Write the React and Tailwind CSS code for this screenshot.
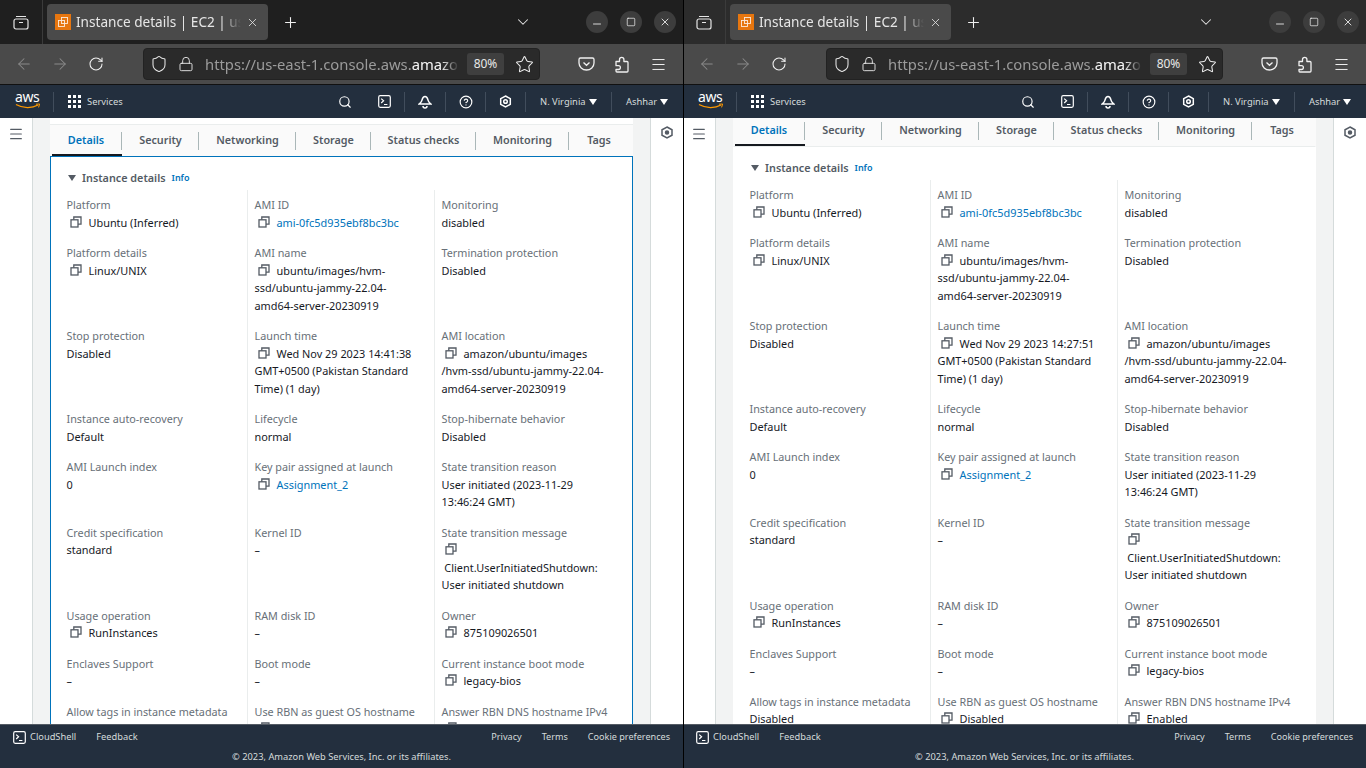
import { ArrowLeft, ArrowRight, ChevronDown, CircleHelp, Lock, Menu, Minus, Plus, RotateCw, Search, Shield, Square, Star, X } from "lucide-react";

const rows = (launch) => [
  [
    { label: "Platform", value: "Ubuntu (Inferred)", copy: true },
    { label: "AMI ID", value: "ami-0fc5d935ebf8bc3bc", copy: true, link: true },
    { label: "Monitoring", value: "disabled" },
  ],
  [
    { label: "Platform details", value: "Linux/UNIX", copy: true },
    { label: "AMI name", value: "ubuntu/images/hvm-\nssd/ubuntu-jammy-22.04-\namd64-server-20230919", copy: true },
    { label: "Termination protection", value: "Disabled" },
  ],
  [
    { label: "Stop protection", value: "Disabled" },
    { label: "Launch time", value: `Wed Nov 29 2023 ${launch}\nGMT+0500 (Pakistan Standard\nTime) (1 day)`, copy: true },
    { label: "AMI location", value: "amazon/ubuntu/images\n/hvm-ssd/ubuntu-jammy-22.04-\namd64-server-20230919", copy: true },
  ],
  [
    { label: "Instance auto-recovery", value: "Default" },
    { label: "Lifecycle", value: "normal" },
    { label: "Stop-hibernate behavior", value: "Disabled" },
  ],
  [
    { label: "AMI Launch index", value: "0" },
    { label: "Key pair assigned at launch", value: "Assignment_2", copy: true, link: true },
    { label: "State transition reason", value: "User initiated (2023-11-29\n13:46:24 GMT)" },
  ],
  [
    { label: "Credit specification", value: "standard" },
    { label: "Kernel ID", value: "–" },
    { label: "State transition message", value: "\n\u00a0Client.UserInitiatedShutdown:\nUser initiated shutdown", copy: true },
  ],
  [
    { label: "Usage operation", value: "RunInstances", copy: true },
    { label: "RAM disk ID", value: "–" },
    { label: "Owner", value: "875109026501", copy: true },
  ],
  [
    { label: "Enclaves Support", value: "–" },
    { label: "Boot mode", value: "–" },
    { label: "Current instance boot mode", value: "legacy-bios", copy: true },
  ],
  [
    { label: "Allow tags in instance metadata", value: "Disabled" },
    { label: "Use RBN as guest OS hostname", value: "Disabled", copy: true },
    { label: "Answer RBN DNS hostname IPv4", value: "Enabled", copy: true },
  ],
];

const tabs = [
  { name: "Details", width: "w-[72px]" },
  { name: "Security", width: "w-[77px]" },
  { name: "Networking", width: "w-[97px]" },
  { name: "Storage", width: "w-[75px]" },
  { name: "Status checks", width: "w-[105px]" },
  { name: "Monitoring", width: "w-[93px]" },
  { name: "Tags", width: "w-[60px]" },
];

function CopyIcon() {
  return (
    <svg width="12" height="12" viewBox="0 0 12 12" fill="none" stroke="#545b64" strokeWidth="1.3" className="inline-block ml-[3px] mr-[7px] align-[-1px]">
      <rect x="1" y="3.8" width="7" height="7.2" />
      <path d="M3.8 3.8V1H11v7.2H8" />
    </svg>
  );
}

function TerminalIcon() {
  return (
    <svg width="13" height="13" viewBox="0 0 13 13" fill="none" stroke="#fff" strokeWidth="1.2">
      <rect x="0.7" y="0.7" width="11.6" height="11.6" rx="1.5" />
      <path d="M3.2 3.6 5.6 5.8 3.2 8M6 9.5h3.4" />
    </svg>
  );
}

function Caret() {
  return <span className="block w-0 h-0 border-l-[4px] border-r-[4px] border-t-[6px] border-l-transparent border-r-transparent border-t-[#fff]" />;
}

function NavDivider() {
  return <span className="block w-px h-[20px] bg-[#414d5c]" />;
}

function FoxTab() {
  return (
    <div className="w-[221px] h-[36px] flex-none rounded-[4px] bg-[#4a4a4a] flex items-center pl-[8px] pr-[9px] gap-[5px]">
      <span className="w-[16px] h-[16px] bg-[#e7760f] flex items-center justify-center flex-none">
        <svg width="12" height="12" viewBox="0 0 12 12" fill="none" stroke="#fff" strokeWidth="0.9" opacity="0.85">
          <rect x="4.5" y="1.5" width="6" height="6" />
          <rect x="1.5" y="4.5" width="6" height="6" />
        </svg>
      </span>
      <span className="flex-1 mt-[1px] overflow-hidden whitespace-nowrap text-[13.6px] text-[#e6e6e6] [mask-image:linear-gradient(to_right,#000_88%,transparent_100%)]">Instance details | EC2 | us-east-1</span>
      <X size={13} strokeWidth={1.5} color="#e6e6e6" className="flex-none" />
    </div>
  );
}

function WindowButton({ children }) {
  return <span className="w-[22px] h-[22px] rounded-full bg-[#3d3d3d] flex items-center justify-center text-white">{children}</span>;
}

function BrowserChrome({ dark }) {
  return (
    <>
      <div className={`h-[44px] flex items-center flex-none ${dark ? "bg-[#1f1f1f]" : "bg-[#2c2c2c]"}`}>
        <div className="w-[43px] h-full flex-none flex items-center justify-center border-r border-[#3b3b3b] mr-[4px] text-[#e6e6e6]">
          <svg width="16" height="16" viewBox="0 0 16 16" fill="none" stroke="currentColor" strokeWidth="1.2">
            <rect x="1" y="5" width="14" height="10" rx="2" />
            <path d="M3 2.500h10M6 8.500h4" />
          </svg>
        </div>
        <FoxTab />
        <div className="w-[44px] flex-none flex justify-center">
          <Plus size={17} strokeWidth={1.5} color="#f0f0f0" />
        </div>
        <div className="flex-1 flex items-center pr-[7px] gap-[12px] justify-end">
          <ChevronDown size={18} strokeWidth={1.4} color="#e6e6e6" className="mr-[42px]" />
          <WindowButton><Minus size={12} strokeWidth={1.6} className="mt-[4px]" /></WindowButton>
          <WindowButton><Square size={10} strokeWidth={1.6} /></WindowButton>
          <WindowButton><X size={12} strokeWidth={1.6} /></WindowButton>
        </div>
      </div>
      <div className="h-[40px] flex items-center bg-[#4a4a4a] flex-none border-b border-[#111] box-content">
        <div className="w-[143px] flex-none flex items-center pl-[15px] gap-[18px]">
          <ArrowLeft size={18} strokeWidth={1.4} color="#8a8a8a" />
          <ArrowRight size={18} strokeWidth={1.4} color="#8a8a8a" />
          <RotateCw size={16} strokeWidth={1.6} color="#f0f0f0" className="ml-[1px]" />
        </div>
        <div className="w-[397px] h-[32px] flex-none rounded-[4px] bg-[#2a2a2a] border border-[#222] flex items-center pl-[6px] pr-[5px]">
          <Shield size={18} strokeWidth={1.4} color="#e6e6e6" className="flex-none" />
          <Lock size={16} strokeWidth={1.4} color="#e6e6e6" className="flex-none ml-[10px]" />
          <span className="flex-1 ml-[11px] overflow-hidden whitespace-nowrap text-[14.8px] text-[#9b9b9b] [mask-image:linear-gradient(to_right,#000_93%,transparent_100%)]">
            https://us-east-1.console.aws.<span className="text-[#f5f5f5]">amazon</span>.com
          </span>
          <span className="w-[37px] h-[22px] ml-[8px] rounded-[3px] bg-[#3f3f3f] text-[#e8e8e8] text-[12px] flex items-center justify-center flex-none">80%</span>
          <Star size={19} strokeWidth={1.3} color="#f0f0f0" className="flex-none ml-[11px]" />
        </div>
        <div className="flex-1 flex items-center pl-[38px] gap-[19px] text-[#f0f0f0]">
          <svg width="17" height="16" viewBox="0 0 17 16" fill="none" stroke="currentColor" strokeWidth="1.3">
            <path d="M2.5 2h12A1.5 1.5 0 0 1 16 3.5V7a7.5 7 0 0 1-15 0V3.5A1.5 1.5 0 0 1 2.5 2Z" />
            <path d="M5.5 6.5 8.500 9.300l3-2.800" />
          </svg>
          <svg width="17" height="17" viewBox="0 0 17 17" fill="none" stroke="currentColor" strokeWidth="1.300" strokeLinejoin="round">
            <path d="M2 5.500h3.500V3.500a2.200 2.200 0 0 1 4.400 0v2H13a1 1 0 0 1 1 1v8.500a1 1 0 0 1-1 1H3a1 1 0 0 1-1-1v-1.500h2.500a1.900 1.900 0 0 0 0-3.800H2Z" />
          </svg>
          <Menu size={17} strokeWidth={1.4} />
        </div>
      </div>
    </>
  );
}

function AwsNav() {
  return (
    <div className="h-[33px] bg-[#232f3e] flex items-center flex-none text-[#d5dbdb] text-[9.4px] whitespace-nowrap">
      <div className="w-[53px] pl-[15px] flex flex-col items-start leading-[11px] text-white">
        <span className="text-[14px] font-normal tracking-[-0.4px] h-[11px] -mt-[3px]">aws</span>
        <svg width="26" height="7" viewBox="0 0 26 7" fill="none" className="mt-[1px]">
          <path d="M1 1.5C8 5.5 17 5.5 23 2" stroke="#f90" strokeWidth="1.3" />
          <path d="M21 1.2 24.6 1 23.6 4.400" stroke="#f90" strokeWidth="1" />
        </svg>
      </div>
      <NavDivider />
      <div className="grid grid-cols-3 gap-[2px] ml-[14px] w-[13px] flex-none">
        {Array.from({ length: 9 }).map((_, i) => (
          <span key={i} className="w-[3px] h-[3px] bg-white" />
        ))}
      </div>
      <span className="ml-[6px] mt-[1px]">Services</span>
      <div className="ml-auto flex items-center">
        <span className="w-[20px] flex justify-center"><Search size={14} strokeWidth={2} color="#fff" /></span>
        <span className="w-[19px] ml-[20px] flex justify-center"><TerminalIcon /></span>
        <span className="ml-[10px]"><NavDivider /></span>
        <span className="w-[40px] flex justify-center">
          <svg width="14" height="14" viewBox="0 0 14 14" fill="none" stroke="#fff" strokeWidth="1.5">
            <path d="M7 1.500c2.200 0 2.600 2 3 3.600.4 1.600 1.200 2.600 2.600 3.800H1.400C2.800 7.700 3.600 6.700 4 5.100 4.400 3.500 4.800 1.500 7 1.500Z" />
            <path d="M5 11a2 2 0 0 0 4 0" />
          </svg>
        </span>
        <NavDivider />
        <span className="w-[39px] flex justify-center"><CircleHelp size={14} strokeWidth={2} color="#fff" /></span>
        <NavDivider />
        <span className="w-[39px] flex justify-center">
          <svg width="13" height="13" viewBox="0 0 13 13" fill="none" stroke="#fff" strokeWidth="1.5">
            <path d="M6.500 1 11.300 3.700v5.600L6.500 12 1.700 9.300V3.700Z" />
            <circle cx="6.500" cy="6.500" r="1.800" />
          </svg>
        </span>
        <NavDivider />
        <span className="ml-[14px] mt-[1px] w-[45px]">N. Virginia</span>
        <span className="ml-[4px] mr-[14px]"><Caret /></span>
        <NavDivider />
        <span className="ml-[14px] mt-[1px] w-[30px]">Ashhar</span>
        <span className="ml-[4px] mr-[15px]"><Caret /></span>
      </div>
    </div>
  );
}

function DetailCell({ item, col }) {
  return (
    <div className={`pt-[6px] pb-[7px] pl-[7px] pr-[4px] leading-[17.5px] ${col > 0 ? "border-l border-[#eaeded]" : ""}`}>
      <div className="text-[#687078]">{item.label}</div>
      <div className={`text-[10.9px] whitespace-pre-line ${item.link ? "text-[#0073bb]" : "text-[#16191f]"}`}>
        {item.copy && <CopyIcon />}
        {item.value}
      </div>
    </div>
  );
}

function Panel({ focused, launch }) {
  return (
    <div className={`w-[583px] flex-none bg-white ${focused ? "pt-[6px]" : "-mt-[4px]"}`}>
      <div className="h-[32px] border-t border-[#eaeded] bg-[#fafafa] flex items-center">
        {tabs.map((tab, i) => (
          <div key={tab.name} className={`relative h-full flex-none flex items-center justify-center ${tab.width}`}>
            <span className={`font-semibold text-[10.8px] ${i === 0 ? "text-[#0073bb]" : "text-[#545b64]"}`}>{tab.name}</span>
            {i === 0 && <span className="absolute left-[2px] right-0 bottom-0 h-[2px] bg-[#16191f]" />}
            {i < tabs.length - 1 && <span className="absolute right-0 top-[7px] h-[18px] w-px bg-[#aab7b8]" />}
          </div>
        ))}
      </div>
      <div className={`h-[700px] ${focused ? "border border-[#0073bb]" : "border border-white border-t-[#eaeded]"}`}>
        <div className="h-[33px] pl-[17px] pt-[9px] flex items-center gap-[6px]">
          <span className="block w-0 h-0 border-l-[4px] border-r-[4px] border-t-[6px] border-l-transparent border-r-transparent border-t-[#545b64]" />
          <span className="font-semibold text-[#545b64]">Instance details</span>
          <span className="font-semibold text-[#0073bb] text-[9px]">Info</span>
        </div>
        <div className="ml-[8.5px] grid grid-cols-[187px_187px_187px]">
          {rows(launch).flat().map((item, i) => (
            <DetailCell key={item.label} item={item} col={i % 3} />
          ))}
        </div>
      </div>
    </div>
  );
}

function Footer() {
  return (
    <div className="h-[44px] bg-[#232f3e] border-t border-[#545b64] flex-none text-[#d5dbdb] text-[9.3px] whitespace-nowrap">
      <div className="h-[24px] flex items-center pl-[13px] pr-[13px]">
        <TerminalIcon />
        <span className="ml-[4px]">CloudShell</span>
        <span className="ml-[20px]">Feedback</span>
        <span className="ml-auto text-[9.1px]">Privacy</span>
        <span className="ml-[20px] text-[9.1px]">Terms</span>
        <span className="ml-[20px] text-[9.1px]">Cookie preferences</span>
      </div>
      <div className="text-center leading-[16px]">© 2023, Amazon Web Services, Inc. or its affiliates.</div>
    </div>
  );
}

function BrowserWindow({ dark, focused, launch }) {
  return (
    <div className="relative w-[683px] h-full flex flex-col flex-none overflow-hidden">
      {!dark && <span className="absolute left-0 inset-y-0 w-px bg-black z-10" />}
      <BrowserChrome dark={dark} />
      <AwsNav />
      <div className="flex-1 min-h-0 flex overflow-hidden bg-[#f2f3f3] text-[10.8px]">
        <div className="w-[33px] flex-none bg-white border-r border-[#d5dbdb] flex justify-center pt-[8px]">
          <Menu size={16} strokeWidth={1.8} color="#545b64" />
        </div>
        <div className="w-[17px] flex-none" />
        <Panel focused={focused} launch={launch} />
        <div className="w-[18px] flex-none border-r border-[#d5dbdb]" />
        <div className="flex-1 bg-white flex justify-center pt-[8px]">
          <svg width="12" height="13" viewBox="0 0 12 13" fill="none" stroke="#545b64" strokeWidth="1.500">
            <path d="M6 1 11 3.800v5.400L6 12 1 9.200V3.800Z" />
            <circle cx="6" cy="6.500" r="1.500" fill="#545b64" />
          </svg>
        </div>
      </div>
      <Footer />
    </div>
  );
}

export default function App() {
  return (
    <div className="w-[1366px] h-[768px] flex overflow-hidden font-['Noto_Sans','Open_Sans',sans-serif]">
      <BrowserWindow dark focused launch="14:41:38" />
      <BrowserWindow launch="14:27:51" />
    </div>
  );
}
